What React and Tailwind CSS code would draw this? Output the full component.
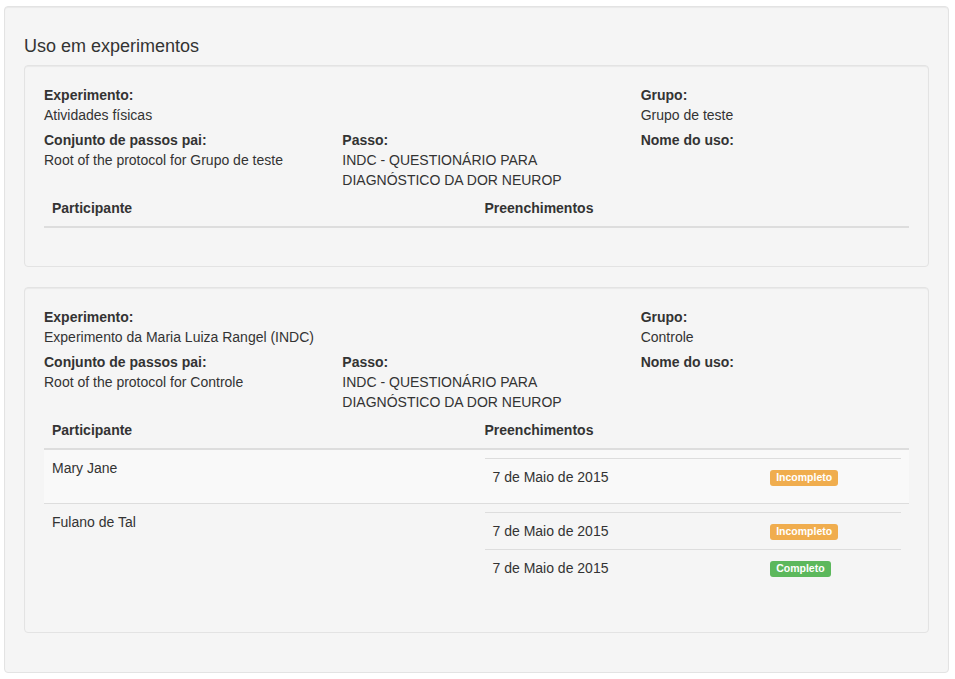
import React from "react";

const font = { fontFamily: '"Liberation Sans", Arial, sans-serif' };

function Field({ label, value }) {
  return (
    <div className="px-[15px]">
      <div className="font-bold">{label}</div>
      {value && <div className="whitespace-nowrap">{value}</div>}
    </div>
  );
}

function Badge({ kind, children }) {
  const bg = kind === "ok" ? "bg-[#5cb85c]" : "bg-[#f0ad4e]";
  return (
    <span
      className={`inline-block ${bg} text-white font-bold text-[10.5px] leading-none px-[6px] pt-[2px] pb-[3px] rounded-[3px] align-[1px]`}
    >
      {children}
    </span>
  );
}

function Usage({ experimento, grupo, conjunto, rows }) {
  return (
    <div className="bg-[#f5f5f5] border border-[#e3e3e3] rounded-[4px] shadow-[inset_0_1px_1px_rgba(0,0,0,0.05)] p-[19px] mb-[20px]">
      <div className="grid grid-cols-3 mx-[-15px] gap-y-[5px]">
        <Field label="Experimento:" value={experimento} />
        <div />
        <Field label="Grupo:" value={grupo} />
        <Field label="Conjunto de passos pai:" value={conjunto} />
        <Field
          label="Passo:"
          value={
            <>
              INDC - QUESTIONÁRIO PARA
              <br />
              DIAGNÓSTICO DA DOR NEUROP
            </>
          }
        />
        <Field label="Nome do uso:" />
      </div>
      <table className="w-full border-collapse mb-[19px]">
        <thead>
          <tr>
            <th className="w-1/2 text-left font-bold p-[8px] border-b-2 border-[#ddd] align-bottom">
              Participante
            </th>
            <th className="w-1/2 text-left font-bold p-[8px] border-b-2 border-[#ddd] align-bottom">
              Preenchimentos
            </th>
          </tr>
        </thead>
        <tbody>
          {rows.map((r, i) => (
            <tr key={i} className={i % 2 === 0 ? "bg-[#f9f9f9]" : ""}>
              <td
                className={`p-[8px] align-top ${
                  i > 0 ? "border-t border-[#ddd]" : ""
                }`}
              >
                {r.name}
              </td>
              <td
                className={`p-[8px] align-top ${
                  i > 0 ? "border-t border-[#ddd]" : ""
                }`}
              >
                <table className="w-full border-collapse">
                  <tbody>
                    {r.items.map((it, j) => (
                      <tr key={j}>
                        <td className="w-2/3 p-[8px] border-t border-[#ddd] align-top">
                          {it.date}
                        </td>
                        <td className="p-[8px] border-t border-[#ddd] align-top">
                          <Badge kind={it.ok ? "ok" : "warn"}>
                            {it.ok ? "Completo" : "Incompleto"}
                          </Badge>
                        </td>
                      </tr>
                    ))}
                  </tbody>
                </table>
              </td>
            </tr>
          ))}
        </tbody>
      </table>
    </div>
  );
}

export default function App() {
  return (
    <div
      className="min-h-[679px] bg-white text-[#333] text-[14px] leading-[20px] pl-[4px] pt-[6px]"
      style={font}
    >
      <div className="w-[945px] bg-[#f5f5f5] border border-[#e3e3e3] rounded-[4px] shadow-[inset_0_1px_1px_rgba(0,0,0,0.05)] px-[19px] pt-[19px] pb-[19px]">
        <h4 className="text-[18px] leading-[20px] font-medium mt-[10px] mb-[9px]">
          Uso em experimentos
        </h4>
        <Usage
          experimento="Atividades físicas"
          grupo="Grupo de teste"
          conjunto="Root of the protocol for Grupo de teste"
          rows={[]}
        />
        <Usage
          experimento="Experimento da Maria Luiza Rangel (INDC)"
          grupo="Controle"
          conjunto="Root of the protocol for Controle"
          rows={[
            { name: "Mary Jane", items: [{ date: "7 de Maio de 2015", ok: false }] },
            {
              name: "Fulano de Tal",
              items: [
                { date: "7 de Maio de 2015", ok: false },
                { date: "7 de Maio de 2015", ok: true },
              ],
            },
          ]}
        />
      </div>
    </div>
  );
}
